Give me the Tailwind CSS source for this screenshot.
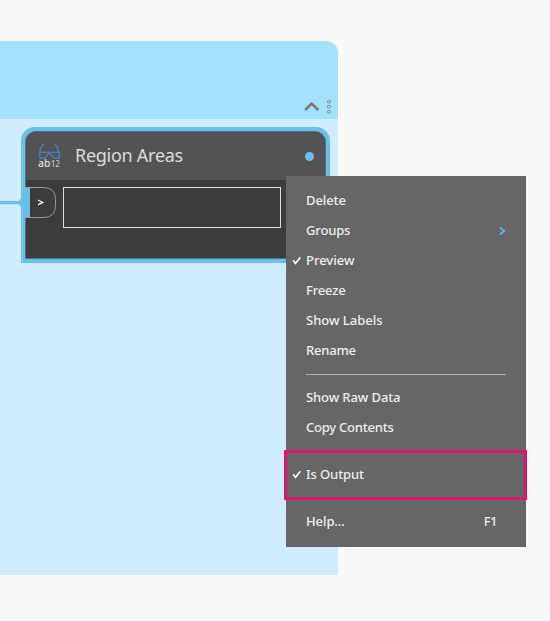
<!DOCTYPE html>
<html lang="en">
<head>
<meta charset="utf-8">
<title>Region Areas</title>
<script src="https://cdn.jsdelivr.net/npm/@tailwindcss/browser@4"></script>
</head>
<body class="relative h-[621px] w-[550px] overflow-hidden bg-[#f9f9f9] font-['Noto_Sans',sans-serif]">
  <div class="pt-[41px]">
    <section class="h-[534px] w-[338px] overflow-hidden rounded-tr-[12px] bg-[#d0edff]">
      <header class="flex h-[78px] items-end justify-end bg-[#a4e1ff] pr-[6px] pb-[5px]">
        <svg class="h-[16px] w-[28px]" viewBox="0 0 28 16" fill="none">
          <path d="M1.2 12L7.7 5.5L14.2 12" stroke="#7b7b7b" stroke-width="2.5"/>
          <g stroke="#7f8b90" stroke-width="1"><rect x="23.5" y="2.5" width="3" height="2.4" rx=".7"/><rect x="23.5" y="7.5" width="3" height="2.4" rx=".7"/><rect x="23.5" y="12.5" width="3" height="2.4" rx=".7"/></g>
        </svg>
      </header>
    </section>
  </div>

  <svg class="absolute top-[195px] left-0 h-[16px] w-[24px]" viewBox="0 0 24 16"><path d="M0 6H18.5L21 3.5H24V12H21L18.5 9.2H0Z" fill="#6ac0e7"/></svg>

  <article class="absolute top-[127px] left-[21px] flex h-[136px] w-[309px] flex-col rounded-t-[14px] bg-[#6ac0e7] px-[4px] py-[4px]">
    <div class="flex h-full flex-col rounded-t-[11px] border border-[#4b7689] bg-[#3c3c3c]">
      <header class="flex h-[48px] shrink-0 items-center rounded-t-[10px] bg-[#535353] pr-[11px] pl-[12px]">
        <svg class="h-[26px] w-[24px] shrink-0" viewBox="0 0 24 26" fill="none">
          <path d="M6 .8Q2.2 3.5 2 9.5M16.3 .8Q20.2 3.5 20.4 9.5" stroke="#477daf" stroke-width="1.6"/>
          <path d="M1.7 9.3H21.3V15H16.2L12.4 10.8H10.4L6.7 15H1.7Z" stroke="#477daf" stroke-width="1.5"/>
          <text x="0" y="24" class="font-['Noto_Sans',sans-serif] text-[10px] font-medium" fill="#dedede" textLength="12.5" lengthAdjust="spacingAndGlyphs">ab</text>
          <text x="12.7" y="24" class="font-['Noto_Sans',sans-serif] text-[9px] font-medium" fill="#c5c5c5" textLength="9.3" lengthAdjust="spacingAndGlyphs">12</text>
        </svg>
        <h1 class="-mt-[2px] ml-[13px] text-[18px] leading-[24px] tracking-[-0.27px] whitespace-nowrap text-[#dcdcdc]">Region Areas</h1>
        <span class="ml-auto size-[9px] rounded-full bg-[#6ac0e7]"></span>
      </header>
      <div class="flex pt-[7px]">
        <svg class="-ml-px h-[31px] w-[31px] shrink-0" viewBox="0 0 31 31" fill="none">
          <rect y="1" width="5" height="29" fill="#6ac0e7"/>
          <path d="M0 .5H18.5Q30.5 .5 30.5 12.5V18.5Q30.5 30.5 18.5 30.5H0" stroke="#999"/>
          <path d="M13 13L17.7 15.4L13 17.8" stroke="#f0f0f0" stroke-width="1.4"/>
        </svg>
        <div class="ml-[7px] h-[41px] w-[218px] border border-[#dedede]"></div>
      </div>
    </div>
  </article>

  <nav class="absolute top-[176px] left-[286px] flex h-[371px] w-[240px] flex-col bg-[#666] pt-[10px] text-[13px] font-medium text-[#eeeeee] *:flex *:h-[30px] *:shrink-0 *:items-center *:pl-[20px] *:whitespace-nowrap">
    <div class="tracking-[-0.1px]">Delete</div>
    <div class="tracking-[-0.15px]"><span>Groups</span><svg class="mr-[20px] ml-auto h-[10px] w-[7px]" viewBox="0 0 7 10" fill="none"><path d="M.8 1.5L5.3 5L.8 8.5" stroke="#69b9e4" stroke-width="1.6"/></svg></div>
    <div class="relative"><svg class="absolute top-[10px] left-[6px] h-[10px] w-[10px]" viewBox="0 0 10 10" fill="none"><path d="M1.2 4.3L3.5 7.4L8.3 1.2" stroke="#fff" stroke-width="1.6"/></svg>Preview</div>
    <div class="tracking-[-0.15px]">Freeze</div>
    <div>Show Labels</div>
    <div class="tracking-[-0.2px]">Rename</div>
    <hr class="mx-[20px] mt-[8px] mb-[8px] !h-px !border-0 bg-[#b2b2b2]">
    <div class="tracking-[-0.1px]">Show Raw Data</div>
    <div class="tracking-[-0.23px]">Copy Contents</div>
    <div class="relative mt-[17px] tracking-[-0.1px]"><svg class="absolute top-[10px] left-[6px] h-[10px] w-[10px]" viewBox="0 0 10 10" fill="none"><path d="M1.2 4.3L3.5 7.4L8.3 1.2" stroke="#fff" stroke-width="1.6"/></svg>Is Output</div>
    <div class="mt-[17px]"><span class="tracking-[-0.1px]">Help...</span><span class="mr-[29px] ml-auto tracking-[-0.5px]">F1</span></div>
  </nav>
  <div class="absolute top-[450px] left-[284px] h-[50px] w-[243px] border-3 border-[#df146f]"></div>
</body>
</html>
